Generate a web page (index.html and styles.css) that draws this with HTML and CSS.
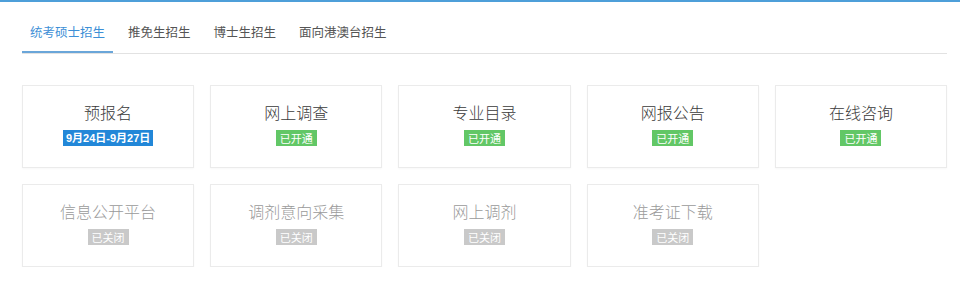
FILE: index.html
```html
<!DOCTYPE html>
<html lang="zh-CN">
<head>
    <meta charset="UTF-8">
    <title>研究生招生</title>
    <link rel="stylesheet" href="styles.css">
</head>
<body>
<div class="topbar"></div>
<div class="container">
    <div class="tabs">
        <div class="tab active">统考硕士招生</div>
        <div class="tab">推免生招生</div>
        <div class="tab">博士生招生</div>
        <div class="tab">面向港澳台招生</div>
    </div>
    <div class="grid">
        <div class="card">
            <div class="title">预报名</div>
            <span class="tag date">9月24日-9月27日</span>
        </div>
        <div class="card">
            <div class="title">网上调查</div>
            <span class="tag open">已开通</span>
        </div>
        <div class="card">
            <div class="title">专业目录</div>
            <span class="tag open">已开通</span>
        </div>
        <div class="card">
            <div class="title">网报公告</div>
            <span class="tag open">已开通</span>
        </div>
        <div class="card">
            <div class="title">在线咨询</div>
            <span class="tag open">已开通</span>
        </div>
        <div class="card closed">
            <div class="title">信息公开平台</div>
            <span class="tag">已关闭</span>
        </div>
        <div class="card closed">
            <div class="title">调剂意向采集</div>
            <span class="tag">已关闭</span>
        </div>
        <div class="card closed">
            <div class="title">网上调剂</div>
            <span class="tag">已关闭</span>
        </div>
        <div class="card closed">
            <div class="title">准考证下载</div>
            <span class="tag">已关闭</span>
        </div>
    </div>
</div>
</body>
</html>
```

FILE: styles.css
```css
* {
    box-sizing: border-box;
}

html, body {
    margin: 0;
    padding: 0;
    background: #fff;
    font-family: "Noto Sans CJK SC", "Microsoft YaHei", sans-serif;
}

.topbar {
    height: 2px;
    background: #4d9fd9;
}

.container {
    width: 925px;
    margin-left: 22px;
}

.tabs {
    display: flex;
    gap: 7px;
    margin-top: 20px;
    border-bottom: 1px solid #e2e2e2;
}

.tab {
    padding: 0 8px;
    height: 31px;
    line-height: 20px;
    font-size: 12.5px;
    color: #555;
    cursor: pointer;
}

.tab.active {
    color: #3d8fd6;
    border-bottom: 2px solid #6aa6d9;
    margin-bottom: -1px;
}

.grid {
    display: grid;
    grid-template-columns: repeat(5, 1fr);
    gap: 16px;
    margin-top: 31px;
}

.card {
    height: 83px;
    border: 1px solid #ebebeb;
    box-shadow: 0 1px 2px rgba(0, 0, 0, 0.03);
    display: flex;
    flex-flow: column nowrap;
    align-items: center;
    padding-top: 14px;
}

.title {
    font-size: 16px;
    line-height: 24px;
    font-weight: 300;
    color: #3a3a3a;
}

.tag {
    margin-top: 6px;
    height: 16px;
    line-height: 16px;
    padding: 0 4px;
    font-size: 11px;
    color: #fff;
    background: #c9c9c9;
}

.tag.date {
    background: #2287d8;
    font-weight: bold;
    padding: 0 3px;
    font-family: "Liberation Sans", "Noto Sans CJK SC", sans-serif;
}

.tag.open {
    background: #62c766;
}

.closed .title {
    color: #9a9a9a;
}
```
